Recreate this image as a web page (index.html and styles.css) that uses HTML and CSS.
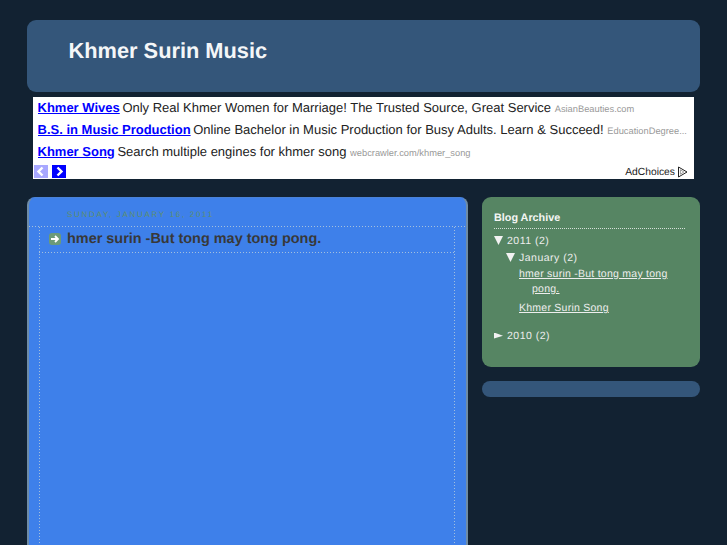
FILE: index.html
```html
<!DOCTYPE html>
<html lang="en">
<head>
<meta charset="utf-8">
<title>Khmer Surin Music</title>
<link rel="stylesheet" href="styles.css">
</head>
<body>
<div class="page">
  <header class="header"><h1 class="blog-title">Khmer Surin Music</h1></header>
  <section class="ad">
    <p class="ad-line"><a href="#">Khmer Wives</a> <span>Only Real Khmer Women for Marriage! The Trusted Source, Great Service</span> <small>AsianBeauties.com</small></p>
    <p class="ad-line"><a href="#">B.S. in Music Production</a> <span>Online Bachelor in Music Production for Busy Adults. Learn &amp; Succeed!</span> <small>EducationDegree...</small></p>
    <p class="ad-line"><a href="#">Khmer Song</a> <span>Search multiple engines for khmer song</span> <small>webcrawler.com/khmer_song</small></p>
    <div class="ad-foot">
      <div class="ad-nav">
        <span class="ad-btn ad-btn-off"><svg width="14" height="13" viewBox="0 0 14 13"><path d="M8.5 2.5 4.5 6.5 8.5 10.5" fill="none" stroke="#fff" stroke-width="2.4"/></svg></span>
        <span class="ad-btn"><svg width="14" height="13" viewBox="0 0 14 13"><path d="M5.5 2.5 9.5 6.5 5.5 10.5" fill="none" stroke="#fff" stroke-width="2.4"/></svg></span>
      </div>
      <div class="ad-choices">AdChoices <svg width="11" height="12" viewBox="0 0 11 12"><path d="M1.5 1V11L10 6Z" fill="#fff" stroke="#222" stroke-width="1"/><path d="M3.4 3.8V8.2L6.8 6Z" fill="none" stroke="#888" stroke-width=".8"/></svg></div>
    </div>
  </section>
  <div class="columns">
    <main class="main">
      <h2 class="date">Sunday, January 16, 2011</h2>
      <article class="post">
        <h3 class="post-title">
          <svg class="post-icon" width="12" height="12" viewBox="0 0 12 12"><rect width="12" height="12" rx="3" fill="#6c9a78"/><path d="M2 6H8M6 3 9 6 6 9" fill="none" stroke="#fff" stroke-width="1.8"/></svg>
          hmer surin -But tong may tong pong.
        </h3>
        <div class="post-body"></div>
      </article>
    </main>
    <aside class="sidebar">
      <section class="widget">
        <h2 class="widget-title">Blog Archive</h2>
        <ul class="archive">
          <li class="year"><svg class="arrow" width="9" height="9" viewBox="0 0 9 9"><path d="M0 0H9L4.5 9Z" fill="#f2f2f2"/></svg><span class="label">2011 (2)</span>
            <ul class="archive">
              <li class="month"><svg class="arrow" width="9" height="9" viewBox="0 0 9 9"><path d="M0 0H9L4.5 9Z" fill="#f2f2f2"/></svg><span class="label">January (2)</span>
                <ul class="posts">
                  <li><a href="#">hmer surin -But tong may tong pong.</a></li>
                  <li><a href="#">Khmer Surin Song</a></li>
                </ul>
              </li>
            </ul>
          </li>
          <li class="year year-closed"><svg class="arrow" width="9" height="9" viewBox="0 0 9 9"><path d="M0 2H1.500L9 4.800L0 7.500Z" fill="#f2f2f2"/></svg><span class="label">2010 (2)</span></li>
        </ul>
      </section>
      <div class="empty-widget"></div>
    </aside>
  </div>
</div>
</body>
</html>
```
FILE: styles.css
```css
* { box-sizing: border-box; }
html, body { margin: 0; height: 545px; overflow: hidden; }
body { background: #122232; font-family: "Liberation Sans", Arial, sans-serif; text-rendering: geometricPrecision; }
.page { width: 673px; margin: 20px 0 0 27px; }
.header { height: 72px; background: #34567a; border-radius: 9px; padding: 16px 41.500px 0; }
.blog-title { margin: 0; color: #f4f6f8; font-size: 21.800px; line-height: 30px; font-weight: bold; }
.ad { width: 661.500px; height: 82px; margin: 5px 0 0 5.500px; background: #fff; padding: 1px 0 0 5px; }
.ad-line { margin: 0; height: 22px; line-height: 20px; white-space: nowrap; font-size: 13px; color: #222; overflow: hidden; }
.ad-line a { color: #00f; font-weight: bold; margin-right: -1px; }
.ad-line small { color: #999; font-size: 9.300px; }
.ad-foot { display: flex; justify-content: space-between; align-items: center; margin-left: -3.500px; padding-right: 6px; }
.ad-nav { display: flex; gap: 4px; }
.ad-btn { width: 14px; height: 13px; background: #00f; display: block; }
.ad-btn svg { display: block; }
.ad-btn-off { background: #a8a8ff; }
.ad-choices { display: flex; align-items: center; gap: 2px; padding-top: 2px; font-size: 10.300px; color: #222; }
.columns { display: flex; justify-content: space-between; align-items: flex-start; margin-top: 18px; }
.main { width: 441px; height: 500px; background: #3e80ea; border: 2px solid #6f8ca6; border-width: 1px 2px 0; border-top-color: #4a82d8; border-radius: 8px 8px 0 0; }
.date { margin: 0; height: 29px; padding: 11px 0 0 38px; font-size: 8px; line-height: 12px; font-weight: normal; letter-spacing: 1.700px; text-transform: uppercase; color: #5f8f6c; background: repeating-linear-gradient(90deg, #a3bfdd 0 1px, transparent 1px 3px) bottom / 100% 1px no-repeat; }
.post { width: 416px; height: 460px; margin-left: 10px; background: repeating-linear-gradient(0deg, #a3bfdd 0 1px, transparent 1px 3px) left / 1px 100% no-repeat, repeating-linear-gradient(0deg, #a3bfdd 0 1px, transparent 1px 3px) right / 1px 100% no-repeat; }
.post-title { display: flex; align-items: center; gap: 6px; height: 26px; margin: 0; padding: 0 0 2px 10px; font-size: 14.450px; font-weight: bold; color: #383838; background: repeating-linear-gradient(90deg, #a3bfdd 0 1px, transparent 1px 3px) bottom / 100% 1px no-repeat; }
.sidebar { width: 218px; display: flex; flex-direction: column; gap: 14px; }
.widget { height: 170px; background: #568563; border-radius: 9px; padding: 14px 14px 0 12px; color: #eee; font-size: 10.500px; letter-spacing: .5px; }
.widget-title { margin: 0 0 4px; padding-bottom: 4px; font-size: 10.800px; line-height: 14px; color: #f4f6f4; font-weight: bold; letter-spacing: 0; background: repeating-linear-gradient(90deg, #d5e0d8 0 1px, transparent 1px 2px) bottom / 100% 1px no-repeat; }
.archive { list-style: none; margin: 0; padding: 0; }
.archive .archive { padding-left: 12px; margin-top: 4px; }
.year { line-height: 13px; padding-top: 2px; }
.year-closed { margin-top: 12px; }
.month { line-height: 13px; }
.arrow { margin-right: 4px; vertical-align: -1px; }
.posts { list-style: none; margin: 2px 0 0; padding: 0 0 0 13px; }
.posts li { padding-left: 13px; text-indent: -13px; margin-bottom: 4px; line-height: 15px; letter-spacing: .25px; }
.posts a { color: #eee; }
.empty-widget { height: 16px; background: #34567a; border-radius: 8px; }
```
